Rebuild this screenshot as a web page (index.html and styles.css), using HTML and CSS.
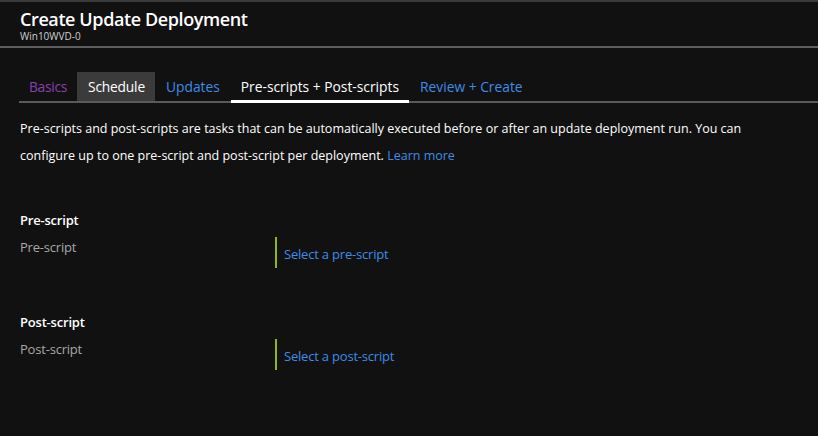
FILE: index.html
```html
<!DOCTYPE html>
<html lang="en">
<head>
<meta charset="utf-8">
<title>Create Update Deployment</title>
<link rel="stylesheet" href="styles.css">
</head>
<body>
<div class="page">
  <header class="header">
    <h1 class="title">Create Update Deployment</h1>
    <div class="subtitle">Win10WVD-0</div>
  </header>
  <main class="content">
    <nav class="tabs">
      <span class="tab tab-visited">Basics</span>
      <span class="tab tab-hover">Schedule</span>
      <span class="tab tab-link">Updates</span>
      <span class="tab tab-active">Pre-scripts + Post-scripts</span>
      <span class="tab tab-link">Review + Create</span>
    </nav>
    <p class="desc">Pre-scripts and post-scripts are tasks that can be automatically executed before or after an update deployment run. You can configure up to one pre-script and post-script per deployment. <a class="link">Learn more</a></p>

    <section class="section">
      <h2 class="section-title">Pre-script</h2>
      <div class="field">
        <div class="field-label">Pre-script</div>
        <div class="field-value"><a class="link">Select a pre-script</a></div>
      </div>
    </section>

    <section class="section">
      <h2 class="section-title">Post-script</h2>
      <div class="field">
        <div class="field-label">Post-script</div>
        <div class="field-value"><a class="link">Select a post-script</a></div>
      </div>
    </section>
  </main>
</div>
</body>
</html>
```

FILE: styles.css
```css
html, body {
  margin: 0;
  padding: 0;
  background: #111111;
}
body {
  font-family: "Open Sans", "Noto Sans", "Liberation Sans", sans-serif;
  color: #ffffff;
  width: 818px;
  height: 436px;
  overflow: hidden;
}
.page {
  border-top: 2px solid #3a3a3a;
}
.header {
  padding: 5px 20px 0;
  height: 39px;
  border-bottom: 2px solid #5e5e5e;
}
.title {
  margin: 0;
  font-size: 18px;
  font-weight: 600;
  line-height: 24px;
  letter-spacing: -0.4px;
}
.subtitle {
  font-size: 10px;
  line-height: 12px;
  color: #d0d0d0;
  margin-top: -1px;
}
.content {
  padding: 24px 0 0 19px;
}
.tabs {
  display: flex;
  height: 29px;
  border-bottom: 2px solid #5a5a5a;
}
.tab {
  font-size: 13.8px;
  line-height: 30px;
  padding: 0 10px;
  white-space: nowrap;
  position: relative;
}
.tab-visited { color: #8c3fb0; letter-spacing: -0.3px; }
.tab-hover { background: #3b3b3b; color: #ffffff; padding: 0 10px 0 11px; letter-spacing: -0.2px; }
.tab-link { color: #3e8ce8; padding: 0 11px; }
.tab-active { color: #ffffff; }
.tab-active::after {
  content: "";
  position: absolute;
  left: 0;
  right: 0;
  bottom: -2px;
  height: 3px;
  background: #ffffff;
}
.desc {
  margin: 12px 0 0 1px;
  width: 735px;
  font-size: 12.5px;
  line-height: 27px;
  color: #ffffff;
}
.link {
  color: #3e8ce8;
  text-decoration: none;
}
.section {
  margin: 42px 0 0 1px;
}
.section + .section {
  margin-top: 45px;
}
.section-title {
  margin: 0;
  font-size: 13px;
  font-weight: 600;
  line-height: 18px;
  letter-spacing: -0.2px;
}
.field {
  display: flex;
  margin-top: 7px;
}
.field-label {
  width: 255px;
  margin-top: 1px;
  font-size: 13px;
  line-height: 20px;
  color: #a8a8a8;
  letter-spacing: -0.2px;
}
.field-value {
  margin-top: 1px;
  height: 31px;
  border-left: 2px solid #8cb914;
  padding-left: 7px;
  padding-top: 2px;
  box-sizing: border-box;
  display: flex;
  align-items: center;
  font-size: 13px;
  letter-spacing: -0.2px;
}
```
